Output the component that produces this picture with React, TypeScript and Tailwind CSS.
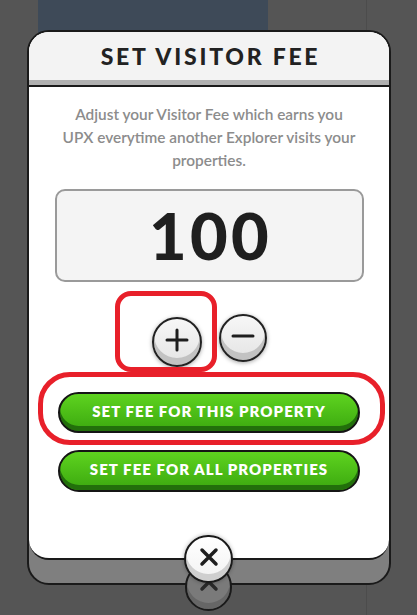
import React from "react";

function Plus() {
  return (
    <svg width="24" height="24" viewBox="0 0 24 24">
      <path d="M12 2 V22 M2 12 H22" stroke="#1e1e1e" strokeWidth="3" strokeLinecap="round" />
    </svg>
  );
}

function Minus() {
  return (
    <svg width="26" height="24" viewBox="0 0 26 24">
      <path d="M3 12 H23" stroke="#1e1e1e" strokeWidth="3" strokeLinecap="round" />
    </svg>
  );
}

function XIcon({ color }: { color: string }) {
  return (
    <svg width="20" height="20" viewBox="0 0 20 20">
      <path d="M3 3 L17 17 M17 3 L3 17" stroke={color} strokeWidth="3.5" strokeLinecap="round" />
    </svg>
  );
}

export default function App() {
  return (
    <div
      className="relative w-[417px] h-[615px] overflow-hidden bg-[#555555]"
      style={{ fontFamily: "Lato, 'Noto Sans', sans-serif" }}
    >
      {/* canvas content behind */}
      <div className="absolute left-[38px] top-0 w-[230px] h-[40px] bg-[#3e4a58]" />
      <div className="absolute left-[366px] top-0 w-[1px] h-[615px] bg-[#4c4c4c]" />

      <div className="relative pt-[30px] pl-[27px]">
        {/* modal outer (gray 3d base) */}
        <div className="w-[364px] bg-[#7f7f7f] border-2 border-[#1a1a1a] rounded-[22px] pb-[23px]">
          <div className="bg-white rounded-[20px] border-b-2 border-[#1a1a1a] overflow-hidden">
            <div className="h-[48px] bg-[#f3f3f3] flex items-center justify-center">
              <span className="text-[23px] font-black tracking-[0.12em] text-[#222] leading-none pl-[3px]">
                SET VISITOR FEE
              </span>
            </div>
            <div className="h-[5px] bg-[#b0b0b0]" />
            <div className="h-[2px] bg-[#1a1a1a]" />

            <div className="flex flex-col items-center pt-[16px] pb-[66px]">
              <p className="text-[15.4px] leading-[23px] text-[#8c8c8c] text-center font-semibold">
                Adjust your Visitor Fee which earns you
                <br />
                UPX everytime another Explorer visits your
                <br />
                properties.
              </p>

              <div className="mt-[17px] w-[309px] h-[93px] rounded-[10px] border-2 border-[#9a9a9a] bg-[#f4f4f4] flex items-center justify-center">
                <span className="text-[65px] font-black tracking-[0.05em] text-[#1f1f1f] leading-none pl-[3px]">100</span>
              </div>

              <div className="mt-[35px] flex items-start gap-[17px] h-[50px]">
                <div className="w-[50px] h-[50px] rounded-full border-2 border-[#222] bg-[linear-gradient(#f7f7f7,#e4e4e4)] shadow-[inset_0_-7px_0_#c2c2c2,0_1px_4px_rgba(0,0,0,0.35)] flex items-center justify-center pb-[4px]">
                  <Plus />
                </div>
                <div className="-mt-[3px] w-[48px] h-[48px] rounded-full border-2 border-[#222] bg-[linear-gradient(#f7f7f7,#e4e4e4)] shadow-[inset_0_-7px_0_#c2c2c2,0_1px_4px_rgba(0,0,0,0.35)] flex items-center justify-center pb-[5px]">
                  <Minus />
                </div>
              </div>

              <div className="mt-[25px] w-[302px] h-[41px] rounded-full border-2 border-[#151515] bg-[linear-gradient(#5ed31f,#3ba80f)] shadow-[inset_0_-5px_0_#226f0b] flex items-center justify-center pb-[3px]">
                <span className="text-white text-[15px] font-extrabold tracking-[0.07em] leading-none">
                  SET FEE FOR THIS PROPERTY
                </span>
              </div>

              <div className="mt-[17px] w-[302px] h-[42px] rounded-full border-2 border-[#151515] bg-[linear-gradient(#5ed31f,#3ba80f)] shadow-[inset_0_-5px_0_#226f0b] flex items-center justify-center pb-[3px]">
                <span className="text-white text-[15px] font-extrabold tracking-[0.07em] leading-none">
                  SET FEE FOR ALL PROPERTIES
                </span>
              </div>
            </div>
          </div>
        </div>
      </div>

      {/* close buttons */}
      <div className="absolute left-[185px] top-[563px] w-[47px] h-[48px] rounded-full border-2 border-[#1a1a1a] bg-[#7a7a7a] shadow-[inset_0_-6px_0_#666] flex items-center justify-center pb-[10px]">
        <XIcon color="#2a2a2a" />
      </div>
      <div className="absolute left-[184px] top-[535px] w-[49px] h-[48px] rounded-full border-2 border-[#1a1a1a] bg-[linear-gradient(#ffffff,#f2f2f2)] shadow-[inset_0_-7px_0_#cfcfcf,0_0_4px_rgba(0,0,0,0.3)] flex items-center justify-center pb-[5px]">
        <XIcon color="#1e1e1e" />
      </div>

      {/* red annotations */}
      <div className="absolute left-[115px] top-[291px] w-[102px] h-[81px] rounded-[16px] border-[5px] border-[#e8202a]" />
      <div className="absolute left-[38px] top-[372px] w-[347px] h-[73px] rounded-[32px] border-[5px] border-[#e8202a]" />
    </div>
  );
}
